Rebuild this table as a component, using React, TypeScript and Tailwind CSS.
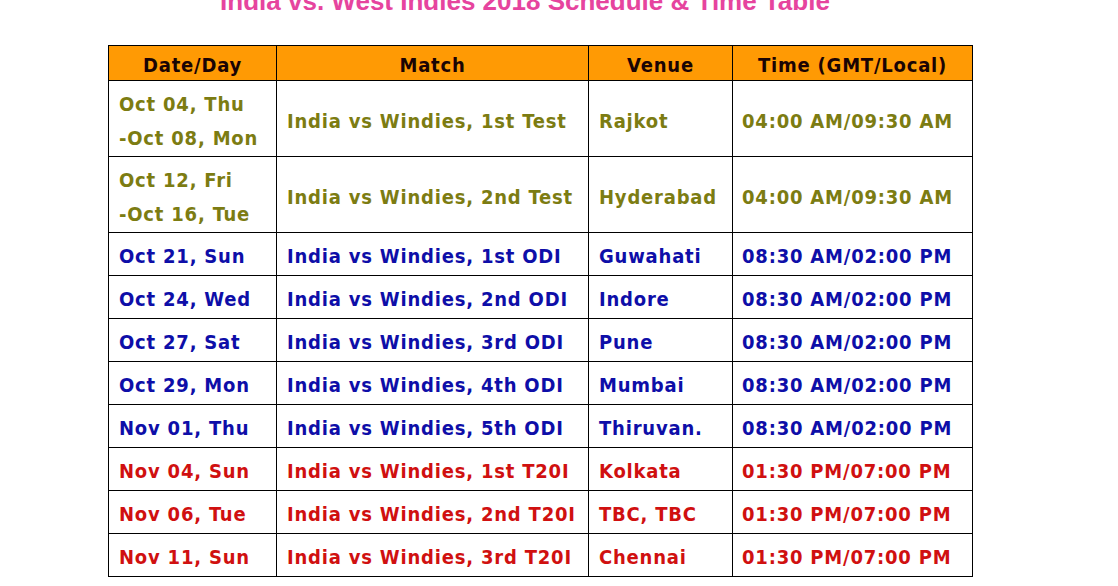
const olive = 'text-[#7c7c12]';
const blue = 'text-[#0e0ea8]';
const red = 'text-[#d01010]';

type Row = {
  date: string[];
  match: string;
  venue: string;
  time: string;
  color: string;
};

const rows: Row[] = [
  { date: ['Oct 04, Thu', '-Oct 08, Mon'], match: 'India vs Windies, 1st Test', venue: 'Rajkot', time: '04:00 AM/09:30 AM', color: olive },
  { date: ['Oct 12, Fri', '-Oct 16, Tue'], match: 'India vs Windies, 2nd Test', venue: 'Hyderabad', time: '04:00 AM/09:30 AM', color: olive },
  { date: ['Oct 21, Sun'], match: 'India vs Windies, 1st ODI', venue: 'Guwahati', time: '08:30 AM/02:00 PM', color: blue },
  { date: ['Oct 24, Wed'], match: 'India vs Windies, 2nd ODI', venue: 'Indore', time: '08:30 AM/02:00 PM', color: blue },
  { date: ['Oct 27, Sat'], match: 'India vs Windies, 3rd ODI', venue: 'Pune', time: '08:30 AM/02:00 PM', color: blue },
  { date: ['Oct 29, Mon'], match: 'India vs Windies, 4th ODI', venue: 'Mumbai', time: '08:30 AM/02:00 PM', color: blue },
  { date: ['Nov 01, Thu'], match: 'India vs Windies, 5th ODI', venue: 'Thiruvan.', time: '08:30 AM/02:00 PM', color: blue },
  { date: ['Nov 04, Sun'], match: 'India vs Windies, 1st T20I', venue: 'Kolkata', time: '01:30 PM/07:00 PM', color: red },
  { date: ['Nov 06, Tue'], match: 'India vs Windies, 2nd T20I', venue: 'TBC, TBC', time: '01:30 PM/07:00 PM', color: red },
  { date: ['Nov 11, Sun'], match: 'India vs Windies, 3rd T20I', venue: 'Chennai', time: '01:30 PM/07:00 PM', color: red },
];

const headers = ['Date/Day', 'Match', 'Venue', 'Time (GMT/Local)'];

const App = () => {
  return (
    <div className="w-[1118px] h-[586px] overflow-hidden bg-white">
      <div className="pl-[108px]">
        {/* Title (cut off by the top edge, as in the source image) */}
        <div className="-mt-[14px] w-[864px] pr-[30px] text-center font-['Liberation_Sans',Arial,sans-serif] text-[26px] leading-[30px] font-bold text-[#e6449e]">
          India vs. West Indies 2018 Schedule &amp; Time Table
        </div>

        {/* Schedule table */}
        <table className="mt-[29px] w-[864px] table-fixed border-collapse font-['DejaVu_Sans_Condensed','DejaVu_Sans',sans-serif] text-[20px] font-bold tracking-[0.8px]">
          <colgroup>
            <col className="w-[168px]" />
            <col className="w-[312px]" />
            <col className="w-[144px]" />
            <col className="w-[240px]" />
          </colgroup>
          <thead>
            <tr className="h-[35px] bg-[#ff9a04]">
              {headers.map(h => (
                <th key={h} className="border border-black p-0 pt-[3px] text-center font-bold text-[#1a0404] leading-[28px]">
                  {h}
                </th>
              ))}
            </tr>
          </thead>
          <tbody>
            {rows.map(r => (
              <tr key={r.match} className={r.date.length > 1 ? 'h-[76px]' : 'h-[43px]'}>
                <td className={`border border-black pl-[10px] pt-[4px] align-middle ${r.color}`}>
                  {r.date.map(d => (
                    <div key={d} className={r.date.length > 1 ? 'leading-[34px]' : 'leading-[28px]'}>
                      {d}
                    </div>
                  ))}
                </td>
                <td className={`border border-black pl-[10px] pt-[4px] align-middle leading-[28px] ${r.color}`}>
                  {r.match}
                </td>
                <td className={`border border-black pl-[10px] pt-[4px] align-middle leading-[28px] ${r.color}`}>
                  {r.venue}
                </td>
                <td className={`border border-black pl-[9px] pt-[4px] align-middle leading-[28px] ${r.color}`}>
                  {r.time}
                </td>
              </tr>
            ))}
          </tbody>
        </table>
      </div>
    </div>
  );
};

export default App;
